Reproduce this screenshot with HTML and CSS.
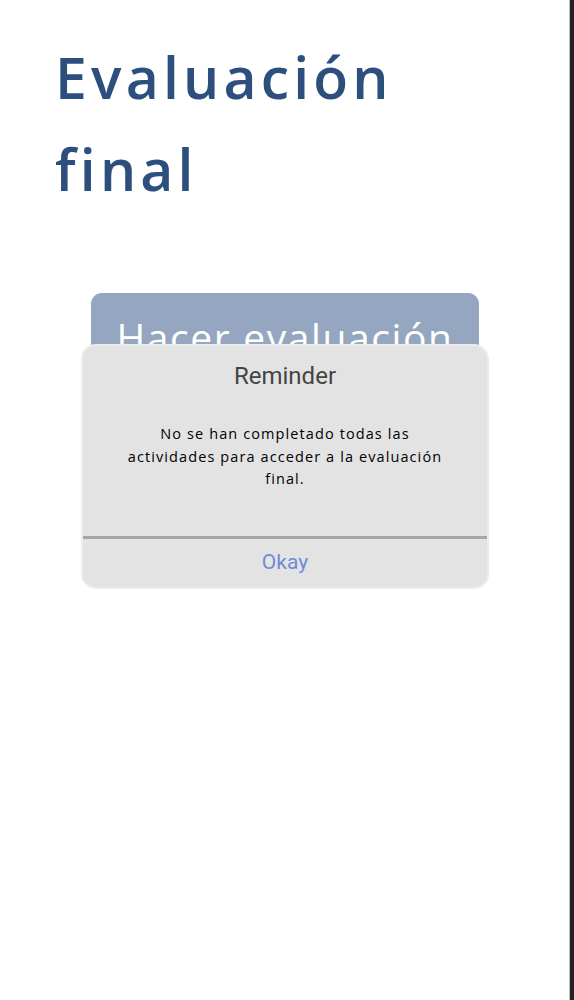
FILE: index.html
```html
<!DOCTYPE html>
<html lang="es">
<head>
<meta charset="utf-8">
<title>Evaluación final</title>
<link rel="stylesheet" href="styles.css">
</head>
<body>
<div class="screen">
  <h1 class="title">Evaluación final</h1>
  <div class="action">
    <button class="start-btn">Hacer evaluación</button>
  </div>
  <div class="dialog">
    <div class="dialog-title">Reminder</div>
    <p class="dialog-msg">No se han completado todas las actividades para acceder a la evaluación final.</p>
    <div class="dialog-sep"></div>
    <div class="dialog-actions"><span class="okay">Okay</span></div>
  </div>
</div>
</body>
</html>
```
FILE: styles.css
```css
html, body {
  margin: 0;
  padding: 0;
  background: #ffffff;
}
.screen {
  position: relative;
  width: 570px;
  height: 1000px;
  border-right: 4px solid #222222;
  box-shadow: inset -1px 0 0 #bdbdbd;
  overflow: hidden;
}
.title {
  margin: 0;
  padding: 31px 100px 0 55px;
  font-family: "Open Sans", "Liberation Sans", sans-serif;
  font-weight: 600;
  font-size: 57px;
  line-height: 92px;
  letter-spacing: 4.2px;
  color: #2c4f7e;
}
.action {
  padding: 78px 0 0 91px;
}
.start-btn {
  display: block;
  width: 388px;
  height: 80px;
  padding: 8px 0 0;
  border: none;
  border-radius: 11px;
  background: #95a7c0;
  color: #ffffff;
  font-family: "Open Sans", "Liberation Sans", sans-serif;
  font-size: 39px;
  letter-spacing: 1.6px;
  line-height: 48px;
  text-align: center;
  vertical-align: top;
}
.dialog {
  position: absolute;
  left: 81px;
  top: 344px;
  width: 404px;
  height: 241px;
  border: 2px solid #ececec;
  border-radius: 15px;
  background: #e3e3e3;
  display: flex;
  flex-direction: column;
  align-items: center;
}
.dialog-title {
  margin-top: 16px;
  font-family: Roboto, "Liberation Sans", sans-serif;
  font-size: 24px;
  line-height: 28px;
  color: #444444;
}
.dialog-msg {
  margin: 33px 0 0;
  width: 326px;
  font-family: "Open Sans", "Liberation Sans", sans-serif;
  font-weight: 500;
  font-size: 14.5px;
  letter-spacing: 1.1px;
  line-height: 22.5px;
  color: #000000;
  text-align: center;
}
.dialog-sep {
  margin-top: auto;
  width: 100%;
  height: 3px;
  background: #a6a6a6;
}
.dialog-actions {
  height: 48px;
  width: 100%;
  display: flex;
  align-items: center;
  justify-content: center;
  padding-bottom: 2px;
  box-sizing: border-box;
}
.okay {
  font-family: Roboto, "Liberation Sans", sans-serif;
  font-size: 21px;
  color: #7189d6;
}
```
